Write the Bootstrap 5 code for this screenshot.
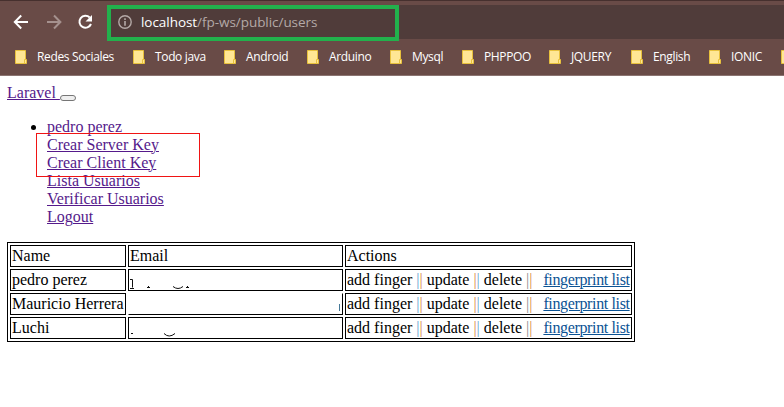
<!DOCTYPE html>
<html lang="es">
<head>
<meta charset="utf-8">
<meta name="viewport" content="width=device-width, initial-scale=1">
<title>Users</title>
<link href="https://cdn.jsdelivr.net/npm/bootstrap@5.3.0/dist/css/bootstrap.min.css" rel="stylesheet">
<style>
body{font:16px/18px "Liberation Serif",serif;color:#000;background:#fff;height:407px;overflow:hidden}
.chrome{height:76px;background:#694b47;border-top:1px solid #46302e;border-bottom:1px solid #8b7471;font-family:"Open Sans","Noto Sans",sans-serif;color:#fff}
.toolbar{height:38px;padding-top:4px}
.tools{width:107px;height:34px;padding-left:13px;gap:14px}
.address{height:34px;background:#503c3a}
.url{width:292px;height:36px;border:4px solid #22b14c;padding-left:7px;gap:9px;font-size:13.5px;line-height:18px}
.url svg{margin-bottom:2px}
.url span{letter-spacing:-.05px;color:#b4a9a7;margin-top:-2px}
.url b{font-weight:400;color:#fff}
.bookmarks{display:grid;grid-template-columns:118px 91px 83px 83px 72px 87px 82px 78px 72px 12px;padding:9px 0 0 15px;font-size:12px;line-height:18px;white-space:nowrap}
.bookmarks>div{gap:10px}
.tight{letter-spacing:-.35px}
.page{padding:8px 0 0 7px}
.page a{color:#551a8b;text-decoration-thickness:1px}
.toggle{width:16px;height:6px;border:1px solid #767676;border-radius:3px;background:#efefef;vertical-align:-3px}
.links{margin:16px 0;padding-left:40px}
.frame{left:-11px;top:15px;width:164px;height:44px;border:1px solid #f01414}
.users{width:628px;table-layout:fixed;border:1px solid #000;border-collapse:separate;border-spacing:2px}
.users td{height:22px;border:1px solid #000;padding:1px;white-space:nowrap}
.users .warm{color:#d98a45}
.users .cool{color:#62a5d0}
.users .gray{color:#8c8c8c}
.users a{color:#0b5394;letter-spacing:-.36px;margin-left:-1px}
.users .open{border-left-color:#fff;border-top-color:#fff}
.users svg{display:block}
</style>
<script src="https://cdn.jsdelivr.net/npm/bootstrap@5.3.0/dist/js/bootstrap.bundle.min.js"></script>
</head>
<body>
<svg class="d-none"><symbol id="folder" viewBox="0 0 12 14"><path d="M.5.5h10v9h1v4H.5z" fill="#ffe694" stroke="#e8c13c"/><path d="M9.5 13V9.5H11" fill="none" stroke="#e8c13c"/></symbol></svg>
<header class="chrome">
<div class="toolbar d-flex">
<div class="tools d-flex align-items-center">
<svg width="16" height="16" viewBox="0 0 16 16" fill="none" stroke="#fff" stroke-width="2"><path d="M15 8H2M8.2 1.5 1.8 8l6.4 6.5"/></svg>
<svg class="ms-1" width="16" height="16" viewBox="0 0 16 16" fill="none" stroke="#a5918e" stroke-width="2"><path d="M0 8h13M7 1.5 13.4 8 7 14.5"/></svg>
<svg width="16" height="16" viewBox="0 0 16 16"><path d="M12.7 3.5A6 6 0 1 0 14 10" fill="none" stroke="#fff" stroke-width="2"/><path d="M15 1v6.5H8.5z" fill="#fff"/></svg>
</div>
<div class="address flex-grow-1"><div class="url d-flex align-items-center">
<svg width="14" height="14" viewBox="0 0 14 14"><circle cx="7" cy="7" r="6.2" fill="none" stroke="#b4a9a7" stroke-width="1.4"/><path d="M6.2 3.3h1.6v1.6H6.2zM6.2 6h1.6v4.7H6.2z" fill="#b4a9a7"/></svg>
<span><b>localhost</b>/fp-ws/public/users</span></div></div>
</div>
<nav class="bookmarks">
<div class="d-flex align-items-center"><svg width="12" height="14"><use href="#folder"/></svg><span class="tight">Redes Sociales</span></div>
<div class="d-flex align-items-center"><svg width="12" height="14"><use href="#folder"/></svg><span class="tight">Todo java</span></div>
<div class="d-flex align-items-center"><svg width="12" height="14"><use href="#folder"/></svg><span class="tight">Android</span></div>
<div class="d-flex align-items-center"><svg width="12" height="14"><use href="#folder"/></svg><span class="tight">Arduino</span></div>
<div class="d-flex align-items-center"><svg width="12" height="14"><use href="#folder"/></svg><span class="tight">Mysql</span></div>
<div class="d-flex align-items-center"><svg width="12" height="14"><use href="#folder"/></svg><span class="tight">PHPPOO</span></div>
<div class="d-flex align-items-center"><svg width="12" height="14"><use href="#folder"/></svg><span class="tight">JQUERY</span></div>
<div class="d-flex align-items-center"><svg width="12" height="14"><use href="#folder"/></svg><span class="tight">English</span></div>
<div class="d-flex align-items-center"><svg width="12" height="14"><use href="#folder"/></svg><span class="tight">IONIC</span></div>
<div class="d-flex align-items-center"><svg width="12" height="14"><use href="#folder"/></svg></div>
</nav>
</header>
<main class="page">
<div><a href="#">Laravel </a> <span class="toggle d-inline-block"></span></div>
<ul class="links"><li class="position-relative"><a href="#">pedro perez</a><br><a href="#">Crear Server Key</a><br><a href="#">Crear Client Key</a><br><a href="#">Lista Usuarios</a><br><a href="#">Verificar Usuarios</a><br><a href="#">Logout</a><span class="frame position-absolute"></span></li></ul>
<table class="users">
<colgroup><col style="width:116px"><col style="width:215px"><col style="width:287px"></colgroup>
<tr><td>Name</td><td>Email</td><td>Actions</td></tr>
<tr><td>pedro perez</td><td><svg width="100" height="18" fill="none" stroke="#111"><path d="M0 8.5h2.5v8M0 17.5h4M17 16.5h3M18.5 15v2M43 15.5q5 4 10 0M56 16.5h3M57.5 15v2"/></svg></td><td>add finger <span class="cool">|</span><span class="warm">|</span> update <span class="warm">|</span><span class="cool">|</span> delete <span class="gray">|</span><span class="warm">|</span> &nbsp; <a href="#">fingerprint list</a></td></tr>
<tr><td>Mauricio Herrera</td><td class="open"><svg class="ms-auto" width="4" height="18"><path d="M2.5 9v7" stroke="#457998"/></svg></td><td>add finger <span class="cool">|</span><span class="warm">|</span> update <span class="warm">|</span><span class="cool">|</span> delete <span class="gray">|</span><span class="warm">|</span> &nbsp; <a href="#">fingerprint list</a></td></tr>
<tr><td>Luchi</td><td><svg width="100" height="18" fill="none" stroke="#111"><path d="M1 14.5h2M34 14.5q5 5 11 0"/></svg></td><td>add finger <span class="cool">|</span><span class="warm">|</span> update <span class="warm">|</span><span class="cool">|</span> delete <span class="gray">|</span><span class="warm">|</span> &nbsp; <a href="#">fingerprint list</a></td></tr>
</table>
</main>
</body>
</html>
